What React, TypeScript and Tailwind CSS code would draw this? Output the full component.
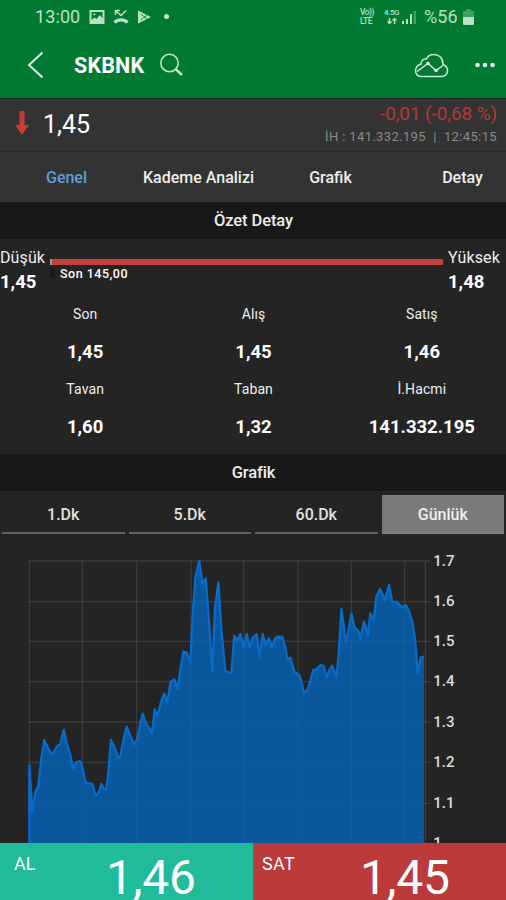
import React, { useState } from "react";

interface SummaryItem {
  label: string;
  value: string;
}

const tabs = ["Genel", "Kademe Analizi", "Grafik", "Detay"];
const periods = ["1.Dk", "5.Dk", "60.Dk", "Günlük"];

const summary: SummaryItem[] = [
  { label: "Son", value: "1,45" },
  { label: "Alış", value: "1,45" },
  { label: "Satış", value: "1,46" },
  { label: "Tavan", value: "1,60" },
  { label: "Taban", value: "1,32" },
  { label: "İ.Hacmi", value: "141.332.195" },
];

// Chart coordinates, in viewBox units
const pricePoints =
  "88,660 97,800 106,742 115,722 124,640 133,585 143,607 154,627 163,618 172,603 181,598 191,555 202,600 211,630 219,670 228,652 240,648 247,665 257,713 277,717 288,753 297,740 304,717 311,730 318,735 325,685 333,585 343,605 354,637 361,636 370,585 380,545 390,570 402,598 411,585 420,540 428,506 438,535 447,548 456,566 464,493 473,512 482,475 493,445 502,472 512,410 523,403 533,432 540,380 550,320 560,322 571,352 578,210 587,90 598,48 607,115 617,100 627,230 637,380 645,190 655,112 664,250 676,378 694,385 703,273 712,287 721,267 731,308 740,267 749,308 758,278 770,268 779,335 788,267 797,300 807,280 816,308 825,280 835,275 847,276 857,310 862,345 871,338 883,380 898,390 906,415 911,446 924,432 940,375 949,373 962,360 971,363 980,398 988,375 996,362 1009,398 1015,340 1021,250 1024,192 1031,240 1037,290 1045,260 1054,205 1063,245 1077,262 1081,282 1092,230 1104,272 1111,205 1121,228 1129,155 1140,132 1155,165 1167,120 1177,172 1189,170 1207,187 1217,180 1226,195 1238,235 1246,290 1253,385 1262,338 1272,335";

const gridX = [88, 247, 410, 573, 731, 894, 1054, 1214, 1276];
const gridY = [
  { y: 48, label: "1.7" },
  { y: 170, label: "1.6" },
  { y: 289, label: "1.5" },
  { y: 410, label: "1.4" },
  { y: 531, label: "1.3" },
  { y: 652, label: "1.2" },
  { y: 775, label: "1.1" },
  { y: 895, label: "1" },
];

function StatusBar() {
  return (
    <div className="flex h-[33px] items-center pl-[35px] pr-[32px] text-[#b9e0c4]">
      <span className="w-[46px] text-[18px] leading-none tracking-[0.1px]">13:00</span>
      <svg className="ml-[8px] mr-[8px]" width="16" height="14" viewBox="0 0 16 14">
        <path
          fillRule="evenodd"
          fill="currentColor"
          d="M0.500 0h15v14H.5zM2.500 2v8l3-2.500 2 1.500 3-4 3 3V2z"
        />
        <circle cx="5.3" cy="4.3" r="1.1" fill="currentColor" />
      </svg>
      <svg width="16" height="16" viewBox="0 0 16 16" fill="none" stroke="currentColor">
        <path d="M2.5 6V1.500H7M2.500 1.500 8 6.500l5-5" strokeWidth="1.500" />
        <path d="M1.500 13.500C5 10 11 10 14.500 13.500" strokeWidth="3.200" />
      </svg>
      <svg className="ml-[8px]" width="15" height="14" viewBox="0 0 15 14">
        <path d="M1 .5l13 6.500-13 6.500z" fill="currentColor" />
        <path d="M3.500 4l4 3-4 3M7 7l3-1.500M7 7l3 1.500" stroke="#007a33" strokeWidth=".8" fill="none" />
      </svg>
      <span className="ml-[12px] h-[5px] w-[5px] rounded-full bg-[#c9ead2]" />

      <div className="ml-auto flex items-center">
        <div className="flex w-[16px] flex-col text-[8.500px] font-medium leading-[9px] tracking-[-0.5px]">
          <span className="h-[9px] overflow-visible">Vo))</span>
          <span className="h-[9px]">LTE</span>
        </div>
        <div className="ml-[7px] flex w-[17px] flex-col items-center">
          <span className="text-[8px] font-medium leading-[8px] tracking-[-0.4px]">4.5G</span>
          <svg width="10" height="8" viewBox="0 0 10 8" stroke="currentColor" fill="none" strokeWidth="1.5">
            <path d="M2.500 1v5.500M.5 4.500l2 2 2-2M7.500 7V1.500M5.500 3.500l2-2 2 2" />
          </svg>
        </div>
        <svg className="ml-[2px]" width="15" height="14" viewBox="0 0 15 14" fill="currentColor">
          <path d="M0 11h2v3H0zM4 9h2v5H4zM8 4h2v10H8z" />
          <path d="M11.500 1h2.500v13h-2.500z" opacity=".35" />
        </svg>
        <span className="ml-[7px] w-[35px] text-[18px] leading-none tracking-[0.1px]">%56</span>
        <svg className="ml-[4px]" width="11" height="16" viewBox="0 0 11 16" fill="currentColor">
          <path d="M3 0h5v2h3v6H0V2h3z" opacity=".35" />
          <path d="M0 8h11v7a1 1 0 0 1-1 1H1a1 1 0 0 1-1-1z" />
        </svg>
      </div>
    </div>
  );
}

function NavBar() {
  return (
    <div className="flex h-[65px] items-center pb-px pl-[27px] pr-[11px] text-white">
      <svg width="17" height="28" viewBox="0 0 17 28" fill="none" stroke="#e3f5e8" strokeWidth="2">
        <path d="M15.500 1.500 2 14l13.500 12.500" />
      </svg>
      <h1 className="ml-[30px] w-[72px] pt-[2px] text-[21.500px] font-bold leading-none tracking-[0.15px]">
        SKBNK
      </h1>
      <svg className="ml-[13px]" width="25" height="24" viewBox="0 0 25 24" fill="none" stroke="#c6e8cf">
        <circle cx="10.500" cy="10" r="8.700" strokeWidth="1.500" />
        <path d="m16.500 16 6.500 6" strokeWidth="2.400" />
      </svg>
      <svg className="ml-auto" width="35" height="25" viewBox="0 0 35 25" fill="none" stroke="#c9ecd2" strokeWidth="1.500">
        <path d="M7 23.500h21a5.500 5.500 0 0 0 5.500-5.500c0-3-2-5.500-4.500-6.500C29 5 25 1.500 20 1.500c-4 0-6.500 2-7.500 4.500-3-.5-5.500 1.500-5.500 5-3 1-5.500 3.500-5.500 7a5.500 5.500 0 0 0 5.500 5.500z" />
        <path d="m3 18.500 11-8 8 7 7-5" />
        <circle cx="14" cy="10.500" r="1.700" fill="#fff" stroke="none" />
        <circle cx="22" cy="17.500" r="1.700" fill="#fff" stroke="none" />
      </svg>
      <svg className="ml-[26px]" width="20" height="6" viewBox="0 0 20 6" fill="#e6f6ea">
        <circle cx="2.500" cy="3" r="2.300" />
        <circle cx="10" cy="3" r="2.300" />
        <circle cx="17.500" cy="3" r="2.300" />
      </svg>
    </div>
  );
}

function SectionTitle({ children }: { children: React.ReactNode }) {
  return (
    <h2 className="flex h-[37px] shrink-0 items-center justify-center bg-[#181818] pl-px pt-[2px] text-[16.500px] font-medium tracking-[-0.1px] text-[#eeeeee]">
      {children}
    </h2>
  );
}

function PriceChart() {
  return (
    <svg className="block" width="506" height="298" viewBox="0 0 1518 894">
      <polygon points={`88,900 ${pricePoints} 1272,900`} fill="#0a579c" />
      <g stroke="#ffffff" strokeWidth="4">
        {gridX.map((x) => (
          <path key={x} d={`M${x} 48V894`} strokeOpacity=".1" />
        ))}
        {gridY.map(({ y }) => (
          <path key={y} d={`M86 ${y}H1290`} strokeOpacity=".1" />
        ))}
      </g>
      {/* Covers most of the grid below the line */}
      <polygon points={`88,900 ${pricePoints} 1272,900`} fill="#0a579c" fillOpacity=".7" />
      <polyline
        points={`88,900 ${pricePoints}`}
        fill="none"
        stroke="#066bc9"
        strokeWidth="7"
        strokeLinejoin="round"
      />
      {gridY.map(({ y, label }) => (
        <text key={label} x="1300" y={y + 14} fill="#dddddd" fontSize="45" fontWeight="500">
          {label}
        </text>
      ))}
    </svg>
  );
}

export default function App() {
  const [activeTab, setActiveTab] = useState("Genel");
  const [period, setPeriod] = useState("Günlük");

  return (
    <div className="flex h-[900px] w-[506px] flex-col overflow-hidden bg-[#242424] font-['Roboto',sans-serif] text-white">
      <header className="h-[98px] shrink-0 bg-[#007a33]">
        <StatusBar />
        <NavBar />
      </header>

      {/* Last price */}
      <div className="flex h-[54px] shrink-0 justify-between border-y border-t-[#252525] border-b-[#292929] bg-[#333333] pl-[15px] pr-[9px]">
        <div className="flex items-center pb-[2px]">
          <svg className="-mt-[2px]" width="14" height="24" viewBox="0 0 14 24" fill="#c83c37">
            <path d="M4.500 0h5v14H14l-7 10-7-10h4.500z" />
          </svg>
          <span className="ml-[14px] text-[25px] leading-none">1,45</span>
        </div>
        <div className="flex flex-col items-end">
          <span className="mt-[4px] text-[19px] leading-[22px] tracking-[-0.1px] text-[#b33a38]">
            -0,01 (-0,68 %)
          </span>
          <span className="mt-[4px] whitespace-pre text-[13px] leading-[16px] tracking-[0.37px] text-[#8c8c8c]">
            {"İH : 141.332.195  |  12:45:15"}
          </span>
        </div>
      </div>

      {/* Tabs */}
      <nav className="flex h-[50px] shrink-0 overflow-hidden bg-[#333333]">
        {tabs.map((tab) => (
          <button
            key={tab}
            onClick={() => setActiveTab(tab)}
            className={`w-[132px] shrink-0 pl-px pt-[2px] text-[16px] font-medium ${
              activeTab === tab ? "text-[#5f9fd8]" : "text-[#eeeeee]"
            }`}
          >
            {tab}
          </button>
        ))}
      </nav>

      <SectionTitle>Özet Detay</SectionTitle>

      {/* Low / high range */}
      <div className="flex h-[56px] shrink-0 pt-[8px]">
        <div className="w-[50px]">
          <p className="text-[16px] leading-[21px] tracking-[0.1px] text-[#eeeeee]">Düşük</p>
          <p className="mt-[2px] text-[18.500px] font-bold leading-[24px]">1,45</p>
        </div>
        <div className="w-[393px] pt-[12px]">
          <div className="h-[6px] border-l-2 border-[#999999] bg-[#c1403d]" />
          <div className="flex items-start">
            <span className="mt-[3px] h-[10px] w-[5px] bg-[#181818]" />
            <span className="ml-[5px] mt-px text-[12.500px] font-medium leading-[16px] tracking-[0.5px]">
              Son 145,00
            </span>
          </div>
        </div>
        <div className="flex-1 pl-[5px]">
          <p className="text-[16px] leading-[21px] tracking-[0.15px] text-[#eeeeee]">Yüksek</p>
          <p className="mt-[2px] text-[18.500px] font-bold leading-[24px]">1,48</p>
        </div>
      </div>

      <div className="grid h-[159px] shrink-0 grid-cols-3 grid-rows-[75px_75px] pl-px pt-[8px] text-center">
        {summary.map((item) => (
          <div key={item.label}>
            <p className="text-[14px] leading-[22px] tracking-[0.1px] text-[#eeeeee]">{item.label}</p>
            <p className="mt-[15px] text-[18.500px] font-bold leading-[24px]">{item.value}</p>
          </div>
        ))}
      </div>

      <SectionTitle>Grafik</SectionTitle>

      {/* Periods */}
      <div className="flex h-[54px] shrink-0 gap-[4px] pl-[2px] pr-[2px] pt-[4px]">
        {periods.map((p) => (
          <button
            key={p}
            onClick={() => setPeriod(p)}
            className={`h-[39px] flex-1 border-b-2 pt-[3px] text-[16px] font-medium ${
              period === p
                ? "border-[#808080] bg-[#7a7a7a] text-[#eeeeee]"
                : "border-[#606060] text-[#e0e0e0]"
            }`}
          >
            {p}
          </button>
        ))}
      </div>

      <div className="h-[298px] shrink-0">
        <PriceChart />
      </div>

      {/* Buy / sell */}
      <footer className="grid h-[57px] shrink-0 grid-cols-2 overflow-hidden">
        <button className="flex items-start bg-[#20bb9b] pl-[14px] text-left">
          <span className="mt-[10px] w-[92px] text-[18px] leading-[22px]">AL</span>
          <span className="mt-[6px] text-[48px] leading-[58px] tracking-[-0.1px]">1,46</span>
        </button>
        <button className="flex items-start border-l border-[#8a5a50] bg-[#bc3a3a] pl-[8px] text-left">
          <span className="mt-[10px] w-[98px] text-[18px] leading-[22px] tracking-[0.3px]">SAT</span>
          <span className="mt-[6px] text-[48px] leading-[58px] tracking-[-0.1px]">1,45</span>
        </button>
      </footer>
    </div>
  );
}
